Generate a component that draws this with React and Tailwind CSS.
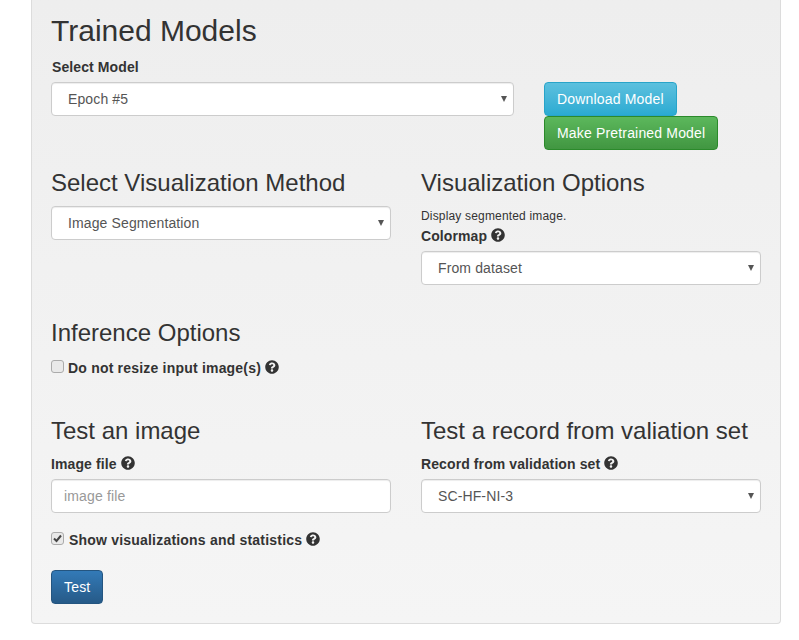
import { FaQuestionCircle } from 'react-icons/fa';

function Help() {
  return <FaQuestionCircle className="inline-block ml-1 w-[14px] h-[14px] text-[#333] align-[-1px]" />;
}

function Label({ children, help }) {
  return (
    <label className="block h-5 text-sm leading-5 font-bold text-[#333] tracking-[0.1px]">
      {children}
      {help && <Help />}
    </label>
  );
}

function Select({ value }) {
  return (
    <div className="relative">
      <select
        defaultValue={value}
        className="block w-full h-[34px] pl-4 pr-6 appearance-none bg-white border border-[#ccc] rounded text-sm tracking-[0.12px] text-[#555] shadow-[inset_0_1px_1px_rgba(0,0,0,0.075)]"
      >
        <option>{value}</option>
      </select>
      <svg className="absolute right-[7px] top-[14px] w-[6px] h-[6px] pointer-events-none" viewBox="0 0 6 6">
        <path d="M0 0h6L3 6z" fill="#555" />
      </svg>
    </div>
  );
}

function Check({ checked, label }) {
  return (
    <div className="flex items-center h-5">
      <span className={`relative w-[13px] h-[13px] -mt-[3px] ${checked ? 'mr-[5px]' : 'mr-1'}`}>
        <input
          type="checkbox"
          defaultChecked={checked}
          className="block w-[13px] h-[13px] appearance-none rounded-[3px] border border-[#ababab] bg-[#e9e9e9]"
        />
        {checked && (
          <svg className="absolute left-[2px] top-[2px] w-[9px] h-[9px] pointer-events-none" viewBox="0 0 9 9">
            <path d="M1 4.5l2.5 2.5L8 1.5" fill="none" stroke="#444" strokeWidth="2" />
          </svg>
        )}
      </span>
      <span className="text-sm font-bold text-[#333] tracking-[0.2px]">
        {label}
        <Help />
      </span>
    </div>
  );
}

const btn = 'block h-[34px] px-3 rounded border text-sm tracking-[0.17px] text-white';

export default function App() {
  return (
    <div className="h-[640px] bg-white overflow-hidden font-['Liberation_Sans',Arial,sans-serif]">
      <div className="ml-[31px] w-[750px] h-[624px] px-[19px] border-x border-b border-[#dcdcdc] rounded-b bg-gradient-to-b from-[#eeeeee] to-[#f5f5f5]">
        <h2 className="pt-[14px] text-[30px] leading-[33px] text-[#333]">Trained Models</h2>

        <div className="mt-[10px] flex">
          <div className="w-[463px]">
            <div className="pl-px">
              <Label>Select Model</Label>
            </div>
            <div className="mt-[5px]">
              <Select value="Epoch #5" />
            </div>
          </div>
          <div className="ml-[30px] pt-[25px] flex flex-col items-start">
            <button className={`${btn} border-[#28a4c9] bg-gradient-to-b from-[#5bc0de] to-[#2aabd2]`}>Download Model</button>
            <button className={`${btn} border-[#2b8a2b] bg-gradient-to-b from-[#5cb85c] to-[#419641]`}>Make Pretrained Model</button>
          </div>
        </div>

        <div className="mt-[20px] grid grid-cols-[340px_340px] gap-x-[30px]">
          <div>
            <h3 className="text-2xl leading-[26px] text-[#333]">Select Visualization Method</h3>
            <div className="mt-[10px]">
              <Select value="Image Segmentation" />
            </div>
          </div>
          <div>
            <h3 className="text-2xl leading-[26px] text-[#333]">Visualization Options</h3>
            <div className="mt-[12px] h-[18px] text-xs leading-[17px] tracking-[0.17px] text-[#333]">Display segmented image.</div>
            <Label help>Colormap</Label>
            <div className="mt-[5px]">
              <Select value="From dataset" />
            </div>
          </div>
        </div>

        <h3 className="mt-[35px] text-2xl leading-[26px] text-[#333]">Inference Options</h3>
        <div className="mt-[12px]">
          <Check label="Do not resize input image(s)" />
        </div>

        <div className="mt-[40px] grid grid-cols-[340px_340px] gap-x-[30px]">
          <div>
            <h3 className="text-2xl leading-[26px] text-[#333]">Test an image</h3>
            <div className="mt-[10px]">
              <Label help>Image file</Label>
            </div>
            <input
              placeholder="image file"
              className="mt-[5px] block w-full h-[34px] px-3 bg-white border border-[#ccc] rounded text-sm tracking-[0.15px] text-[#555] placeholder:text-[#999] shadow-[inset_0_1px_1px_rgba(0,0,0,0.075)]"
            />
          </div>
          <div>
            <h3 className="text-2xl leading-[26px] text-[#333]">Test a record from valiation set</h3>
            <div className="mt-[10px]">
              <Label help>Record from validation set</Label>
            </div>
            <div className="mt-[5px]">
              <Select value="SC-HF-NI-3" />
            </div>
          </div>
        </div>

        <div className="mt-[17px]">
          <Check checked label="Show visualizations and statistics" />
        </div>
        <button className={`${btn} mt-[20px] border-[#245580] bg-gradient-to-b from-[#337ab7] to-[#265a88]`}>Test</button>
      </div>
    </div>
  );
}
